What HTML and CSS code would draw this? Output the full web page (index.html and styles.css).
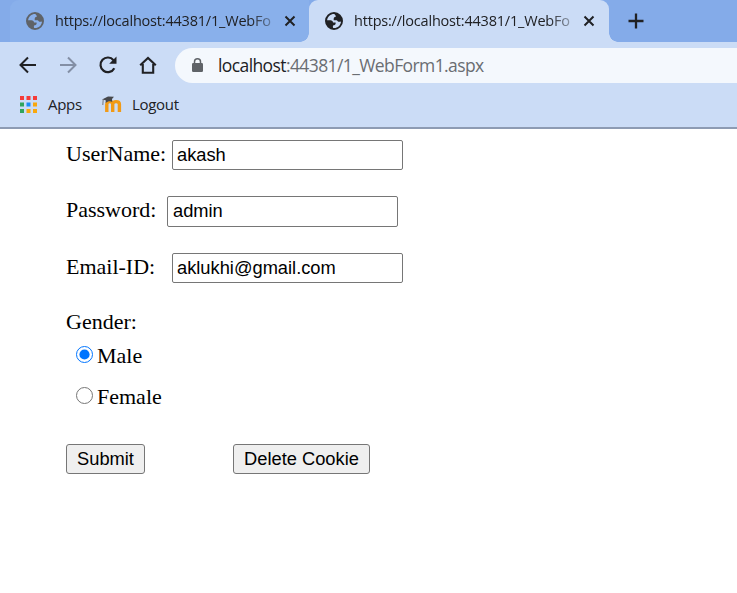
FILE: index.html
```html
<!DOCTYPE html>
<html lang="en">
<head>
<meta charset="utf-8">
<title>WebForm1</title>
<link rel="stylesheet" href="styles.css">
</head>
<body>
<svg class="defs" width="0" height="0">
  <symbol id="globe" viewBox="0 0 18 18"><path fill="currentColor" fill-rule="evenodd" d="M9 0a9 9 0 1 0 0 18A9 9 0 0 0 9 0zM9.300 2C5.600 1.900 2.500 4.600 2.100 8.200h3.300c1.700 0 2.500 1 2.600 2.200h2.600c.6 2-1.100 2.900-2.600 3-.2 1-.2 1.900.2 2.500 4.100.5 7.600-2.500 7.800-6.500-1.200.7-2.900.6-3.500-.5-.6-.9-2.100-.6-3.700-.7-.5-1.900.3-3.300 2-3.500 0-1.300-.5-1.500-1.500-2.700z"/></symbol>
  <symbol id="close" viewBox="0 0 12 12"><path d="M1.500 1.500l9 9m0-9l-9 9" stroke="currentColor" stroke-width="2" fill="none"/></symbol>
</svg>
<header class="browser">
  <div class="tabs">
    <div class="tab tab-idle">
      <svg class="globe"><use href="#globe"/></svg>
      <span class="tab-title">https://localhost:44381/1_WebFo</span>
      <svg class="close"><use href="#close"/></svg>
    </div>
    <div class="tab tab-active">
      <svg class="globe"><use href="#globe"/></svg>
      <span class="tab-title">https://localhost:44381/1_WebFo</span>
      <svg class="close"><use href="#close"/></svg>
    </div>
    <svg class="plus" viewBox="0 0 16 16"><path d="M8 .5v15M.5 8h15" stroke="#202124" stroke-width="2.300"/></svg>
  </div>
  <div class="toolbar">
    <svg class="nav" viewBox="0 0 20 20"><path d="M18 10H3M10 2.500L2.500 10l7.500 7.500" fill="none" stroke="#202124" stroke-width="2"/></svg>
    <svg class="nav" viewBox="0 0 20 20"><path d="M2 10h15M10 2.500l7.500 7.500-7.500 7.500" fill="none" stroke="#838fa5" stroke-width="2"/></svg>
    <svg class="nav" viewBox="0 0 20 20"><path d="M16.300 13.200A7.300 7.300 0 1 1 15.500 5.200" fill="none" stroke="#202124" stroke-width="2.200"/><path d="M18.500 1.500v7.300h-7.300z" fill="#202124"/></svg>
    <svg class="nav" viewBox="0 0 20 20"><path d="M2.200 10.300L10 3l7.800 7.300M4.800 9v8.800h10.400V9" fill="none" stroke="#202124" stroke-width="2.100"/></svg>
    <div class="address">
      <svg class="lock" viewBox="0 0 11 14"><path d="M2.500 6V3.800a3 3 0 0 1 6 0V6" fill="none" stroke="#5f6368" stroke-width="1.500"/><rect y="5" width="11" height="9" rx="1.200" fill="#5f6368"/></svg>
      <span class="url"><span class="host">localhost</span>:44381/1_WebForm1.aspx</span>
    </div>
  </div>
  <div class="bookmarks">
    <svg class="apps" viewBox="0 0 17 17">
      <path fill="#f53b38" d="M0 0h4v4H0zM6.500 0h4v4h-4zM13 0h4v4h-4z"/>
      <path fill="#30a45c" d="M0 6.500h4v4H0zM0 13h4v4H0z"/>
      <path fill="#1a8cf5" d="M6.500 6.500h4v4h-4z"/>
      <path fill="#f9a80d" d="M13 6.500h4v4h-4zM6.500 13h4v4h-4zM13 13h4v4h-4z"/>
    </svg>
    <span class="apps-label">Apps</span>
    <svg class="moodle" viewBox="0 0 20 17">
      <path d="M4.800 16V8.300c0-3.600 5.900-3.600 5.900 0V16m0-7.700c0-3.600 6.700-3.600 6.700 0V16" fill="none" stroke="#f19a16" stroke-width="3.400"/>
      <path d="M0 3.500L6 .6l6 .2-2 2.300.2 2.800c-2-1.200-4.500-.8-6.500 1.200V4.300z" fill="#47484c"/>
      <path d="M1.200 3.500L.8 9" stroke="#77777b"/>
    </svg>
    <span class="logout-label">Logout</span>
  </div>
</header>
<form class="form">
  <div class="field"><label class="label" for="user">UserName:</label><input class="text" id="user" value="akash"></div>
  <div class="field field-password"><label class="label" for="pass">Password:</label><input class="text" id="pass" value="admin"></div>
  <div class="field"><label class="label" for="mail">Email-ID:</label><input class="text" id="mail" value="aklukhi@gmail.com"></div>
  <div class="gender">Gender:</div>
  <label class="option"><input class="radio" type="radio" name="g" checked>Male</label>
  <label class="option"><input class="radio" type="radio" name="g">Female</label>
  <div class="actions">
    <button class="button submit" type="button">Submit</button>
    <button class="button delete" type="button">Delete Cookie</button>
  </div>
</form>
</body>
</html>
```
FILE: styles.css
```css
* { box-sizing: border-box; }
body { margin: 0; background: #fff; overflow: hidden; }
.defs { display: block; height: 0; }
.browser {
  height: 129px;
  background: #cbdcf6;
  border-bottom: 2px solid #8d9bb3;
  font-family: "Open Sans", sans-serif;
  color: #202124;
}
.tabs { display: flex; height: 42px; background: #84abe9; }
.tab { display: flex; align-items: center; height: 42px; }
.tab-idle {
  width: 299px;
  margin-left: 10px;
  padding-left: 16px;
  background: #89b0eb;
  border-radius: 9px 0 9px 0;
}
.tab-active {
  position: relative;
  width: 300px;
  padding-left: 16px;
  background: #cbdcf6;
  border-radius: 9px 9px 0 0;
}
.tab-active::before,
.tab-active::after {
  content: "";
  position: absolute;
  bottom: 0;
  width: 9px;
  height: 9px;
}
.tab-active::before { right: 100%; background: radial-gradient(circle at 0 0, transparent 8.5px, #cbdcf6 9px); }
.tab-active::after { left: 100%; background: radial-gradient(circle at 100% 0, transparent 8.5px, #cbdcf6 9px); }
.globe { width: 18px; height: 18px; flex: none; }
.tab-idle .globe { color: #5f6368; }
.tab-title {
  width: 219px;
  margin-left: 11px;
  padding-bottom: 1px;
  white-space: nowrap;
  font-size: 14.5px;
  letter-spacing: -0.2px;
  mask-image: linear-gradient(to right, #000 89%, transparent 104%);
}
.close { width: 12px; height: 12px; margin-left: 10px; flex: none; }
.plus { width: 16px; height: 16px; margin: 13px 0 0 19px; }
.toolbar { display: flex; align-items: center; height: 46px; gap: 20px; padding-left: 18px; }
.nav { width: 20px; height: 20px; flex: none; }
.address {
  display: flex;
  align-items: center;
  flex: 1;
  height: 35px;
  margin-left: -3px;
  padding-left: 17px;
  background: #f4f8fd;
  border-radius: 18px 0 0 18px;
}
.lock { width: 11px; height: 14px; }
.url { margin-left: 15px; padding-bottom: 1px; font-size: 17.5px; letter-spacing: -0.6px; color: #6a6d72; }
.host { color: #202124; }
.bookmarks { display: flex; align-items: center; height: 33px; padding-left: 20px; font-size: 15px; letter-spacing: -0.3px; }
.apps { width: 17px; height: 17px; }
.apps-label { margin-left: 11px; padding-bottom: 2px; width: 34px; white-space: nowrap; }
.moodle { width: 20px; height: 17px; margin-left: 20px; }
.logout-label { margin-left: 10px; padding-bottom: 2px; }
.form { padding: 11px 0 0 66px; font: 22px/26px "Liberation Serif", serif; color: #000; }
.field { display: flex; height: 30px; margin-bottom: 26px; }
.field-password { height: 31px; }
.label { width: 106px; padding-top: 1px; }
.field-password .label { width: 101px; }
.text {
  width: 231px;
  height: 100%;
  margin: 0;
  padding: 1px 4px;
  border: 1px solid #767676;
  border-radius: 2px;
  color: #000;
  font: 18.3px "Liberation Sans", sans-serif;
}
.field-password .text { padding: 0 5px 2px; }
.gender { height: 26px; }
.option { display: flex; align-items: center; height: 41px; padding-left: 10px; }
.radio { width: 17px; height: 17px; margin: 0 4px 2px 0; }
.actions { display: flex; gap: 88px; margin-top: 27px; }
.button {
  height: 30px;
  padding: 0;
  border: 1px solid #767676;
  border-radius: 3px;
  background: #efefef;
  color: #000;
  font: 18.3px "Liberation Sans", sans-serif;
}
.submit { width: 79px; }
.delete { width: 137px; }
```
